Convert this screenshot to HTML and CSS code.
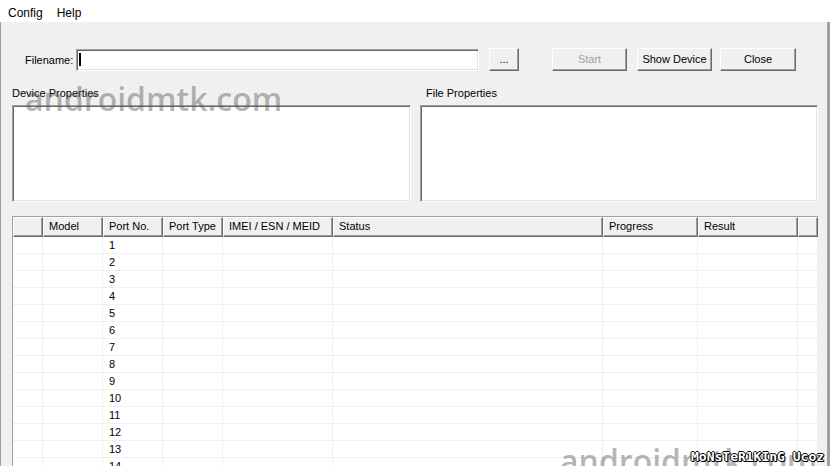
FILE: index.html
```html
<!DOCTYPE html>
<html lang="en">

<head>
    <meta charset="UTF-8" />
    <meta name="viewport" content="width=device-width, initial-scale=1.0" />
    <title>Flash Tool</title>
    <link rel="stylesheet" href="styles.css">
</head>

<body>
    <nav class="menubar">
        <span class="menu-item">Config</span>
        <span class="menu-item">Help</span>
    </nav>

    <main class="window">
        <div class="file-row">
            <label class="file-label" for="filename">Filename:</label>
            <div class="text-input" id="filename"><span class="caret"></span></div>
            <button class="btn btn-browse">...</button>
            <button class="btn btn-start" disabled>Start</button>
            <button class="btn btn-show">Show Device</button>
            <button class="btn btn-close">Close</button>
        </div>

        <div class="props">
            <div class="prop-group">
                <span class="prop-label">Device Properties</span>
                <div class="prop-box"></div>
            </div>
            <div class="prop-group" id="file-props">
                <span class="prop-label">File Properties</span>
                <div class="prop-box"></div>
            </div>
        </div>

        <div class="grid">
            <div class="grid-row grid-head">
                <div class="cell"></div>
                <div class="cell">Model</div>
                <div class="cell">Port No.</div>
                <div class="cell">Port Type</div>
                <div class="cell">IMEI / ESN / MEID</div>
                <div class="cell">Status</div>
                <div class="cell">Progress</div>
                <div class="cell">Result</div>
                <div class="cell"></div>
            </div>
            <div class="grid-row"><div class="cell"></div><div class="cell"></div><div class="cell">1</div><div class="cell"></div><div class="cell"></div><div class="cell"></div><div class="cell"></div><div class="cell"></div><div class="cell"></div></div>
            <div class="grid-row"><div class="cell"></div><div class="cell"></div><div class="cell">2</div><div class="cell"></div><div class="cell"></div><div class="cell"></div><div class="cell"></div><div class="cell"></div><div class="cell"></div></div>
            <div class="grid-row"><div class="cell"></div><div class="cell"></div><div class="cell">3</div><div class="cell"></div><div class="cell"></div><div class="cell"></div><div class="cell"></div><div class="cell"></div><div class="cell"></div></div>
            <div class="grid-row"><div class="cell"></div><div class="cell"></div><div class="cell">4</div><div class="cell"></div><div class="cell"></div><div class="cell"></div><div class="cell"></div><div class="cell"></div><div class="cell"></div></div>
            <div class="grid-row"><div class="cell"></div><div class="cell"></div><div class="cell">5</div><div class="cell"></div><div class="cell"></div><div class="cell"></div><div class="cell"></div><div class="cell"></div><div class="cell"></div></div>
            <div class="grid-row"><div class="cell"></div><div class="cell"></div><div class="cell">6</div><div class="cell"></div><div class="cell"></div><div class="cell"></div><div class="cell"></div><div class="cell"></div><div class="cell"></div></div>
            <div class="grid-row"><div class="cell"></div><div class="cell"></div><div class="cell">7</div><div class="cell"></div><div class="cell"></div><div class="cell"></div><div class="cell"></div><div class="cell"></div><div class="cell"></div></div>
            <div class="grid-row"><div class="cell"></div><div class="cell"></div><div class="cell">8</div><div class="cell"></div><div class="cell"></div><div class="cell"></div><div class="cell"></div><div class="cell"></div><div class="cell"></div></div>
            <div class="grid-row"><div class="cell"></div><div class="cell"></div><div class="cell">9</div><div class="cell"></div><div class="cell"></div><div class="cell"></div><div class="cell"></div><div class="cell"></div><div class="cell"></div></div>
            <div class="grid-row"><div class="cell"></div><div class="cell"></div><div class="cell">10</div><div class="cell"></div><div class="cell"></div><div class="cell"></div><div class="cell"></div><div class="cell"></div><div class="cell"></div></div>
            <div class="grid-row"><div class="cell"></div><div class="cell"></div><div class="cell">11</div><div class="cell"></div><div class="cell"></div><div class="cell"></div><div class="cell"></div><div class="cell"></div><div class="cell"></div></div>
            <div class="grid-row"><div class="cell"></div><div class="cell"></div><div class="cell">12</div><div class="cell"></div><div class="cell"></div><div class="cell"></div><div class="cell"></div><div class="cell"></div><div class="cell"></div></div>
            <div class="grid-row"><div class="cell"></div><div class="cell"></div><div class="cell">13</div><div class="cell"></div><div class="cell"></div><div class="cell"></div><div class="cell"></div><div class="cell"></div><div class="cell"></div></div>
            <div class="grid-row"><div class="cell"></div><div class="cell"></div><div class="cell">14</div><div class="cell"></div><div class="cell"></div><div class="cell"></div><div class="cell"></div><div class="cell"></div><div class="cell"></div></div>
        </div>
    </main>

    <!-- watermarks over the screenshot -->
    <span class="watermark" id="wm-top">androidmtk.com</span>
    <span class="watermark" id="wm-bottom">androidmtk.com</span>
    <span class="tag">MoNsTeR1KInG Ucoz</span>
</body>

</html>
```

FILE: styles.css
```css
body {
    margin: 0;
    width: 830px;
    height: 466px;
    overflow: hidden;
    background: #f0f0f0;
    font-family: "Liberation Sans", Arial, sans-serif;
    font-size: 11px;
    color: #000;
}

.menubar {
    display: flex;
    height: 22px;
    box-sizing: border-box;
    padding: 6px 0 0 1px;
    background: #ffffff;
    font-size: 12px;
    line-height: 15px;
}

.menu-item {
    padding: 0 7px;
}

.window {
    height: 444px;
    box-sizing: border-box;
    border-left: 1px solid #a0a0a0;
    border-right: 3px solid #a0a0a0;
    padding-top: 26px;
    overflow: hidden;
}

.file-row {
    display: flex;
    align-items: center;
    padding-left: 24px;
}

.file-label {
    width: 46px;
    margin-right: 5px;
}

.text-input {
    width: 403px;
    height: 22px;
    box-sizing: border-box;
    background: #ffffff;
    border-top: 1px solid #a0a0a0;
    border-left: 1px solid #a0a0a0;
    border-bottom: 1px solid #ffffff;
    border-right: 1px solid #ffffff;
    box-shadow: inset 1px 1px 0 #696969, inset -1px -1px 0 #e3e3e3;
    padding: 3px 0 0 2px;
}

.caret {
    display: block;
    width: 2px;
    height: 13px;
    background: #000;
}

.btn {
    height: 23px;
    box-sizing: border-box;
    padding: 0 0 1px;
    font-family: inherit;
    font-size: 11px;
    color: #000;
    background: #f0f0f0;
    border-top: 1px solid #ffffff;
    border-left: 1px solid #ffffff;
    border-bottom: 1px solid #696969;
    border-right: 1px solid #696969;
    box-shadow: inset -1px -1px 0 #a0a0a0;
}

.btn-browse {
    width: 30px;
    margin-left: 10px;
}

.btn-start {
    width: 75px;
    margin-left: 33px;
    color: #a0a0a0;
}

.btn-show {
    width: 75px;
    margin-left: 10px;
}

.btn-close {
    width: 76px;
    margin-left: 8px;
}

.props {
    display: flex;
    margin: 15px 0 0 11px;
}

.prop-group {
    display: flex;
    flex-direction: column;
    width: 399px;
}

.prop-group#file-props {
    width: 398px;
    margin-left: 9px;
}

.prop-group#file-props .prop-label {
    padding-left: 6px;
}

.prop-label {
    height: 14px;
    line-height: 14px;
    margin-bottom: 5px;
}

.prop-box {
    height: 97px;
    box-sizing: border-box;
    background: #ffffff;
    border-top: 1px solid #a0a0a0;
    border-left: 1px solid #a0a0a0;
    border-bottom: 1px solid #ffffff;
    border-right: 1px solid #ffffff;
    box-shadow: inset 1px 1px 0 #696969, inset -1px -1px 0 #e3e3e3;
}

.grid {
    width: 806px;
    margin: 14px 0 0 11px;
    box-sizing: border-box;
    border-top: 1px solid #a0a0a0;
    border-left: 1px solid #a0a0a0;
    background: #ffffff;
}

.grid-row {
    display: grid;
    grid-template-columns: 30px 60px 60px 60px 110px 270px 95px 100px 20px;
    height: 17px;
}

.cell {
    box-sizing: border-box;
    border-right: 1px solid #f0f0f0;
    border-bottom: 1px solid #f0f0f0;
    padding-left: 6px;
    line-height: 16px;
    white-space: nowrap;
    overflow: hidden;
}

.grid-head {
    height: 20px;
}

.grid-head .cell {
    background: #f0f0f0;
    border-top: 1px solid #ffffff;
    border-left: 1px solid #ffffff;
    border-right: 1px solid #696969;
    border-bottom: 1px solid #696969;
    box-shadow: inset -1px -1px 0 #a0a0a0;
    padding-left: 5px;
    line-height: 17px;
}

.watermark {
    position: absolute;
    font-family: "Open Sans", sans-serif;
    font-weight: 600;
    font-size: 32px;
    line-height: 32px;
    color: rgba(90, 90, 90, 0.45);
}

#wm-top {
    left: 25px;
    top: 83px;
}

#wm-bottom {
    left: 560px;
    top: 445px;
}

.tag {
    position: absolute;
    left: 691px;
    top: 450px;
    font-family: "DejaVu Sans Mono", monospace;
    font-weight: bold;
    font-size: 13px;
    line-height: 13px;
    color: #ffffff;
    text-shadow: 1px 0 0 #000, -1px 0 0 #000, 0 1px 0 #000, 0 -1px 0 #000, 1px 1px 0 #000;
}
```
